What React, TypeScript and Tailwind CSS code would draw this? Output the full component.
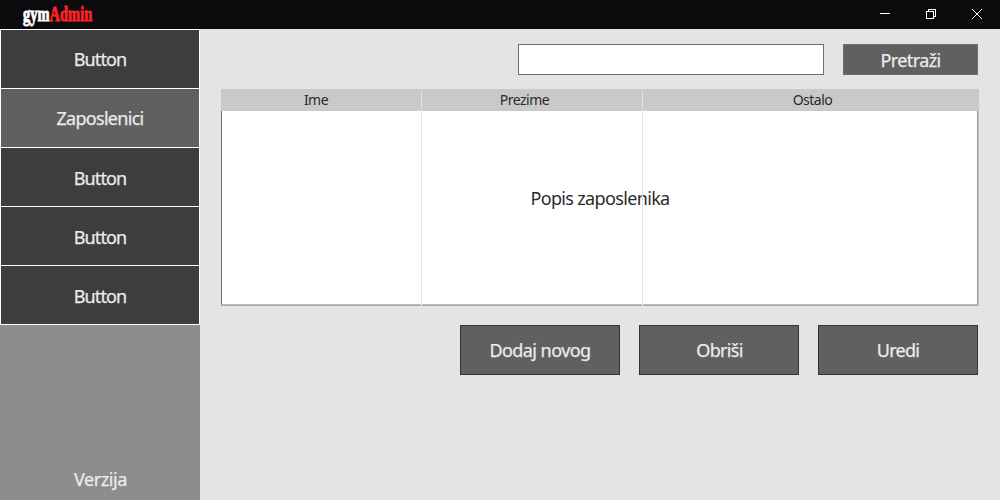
import React from "react";

const navItems = [
  { label: "Button", text: "pb-px tracking-[-0.85px]" },
  { label: "Zaposlenici", text: "pb-px tracking-[-0.7px]", active: true },
  { label: "Button", text: "pt-px tracking-[-0.85px]" },
  { label: "Button", text: "pt-px tracking-[-0.85px]" },
  { label: "Button", text: "pt-px tracking-[-0.85px]" },
];

const actions = [
  { label: "Dodaj novog", text: "tracking-[-0.55px]" },
  { label: "Obriši", text: "pl-[7px] tracking-[-0.7px]" },
  { label: "Uredi", text: "tracking-[-0.75px]" },
];

function TitleBar() {
  return (
    <header className="flex h-[29px] shrink-0 items-start justify-between bg-[#0c0c0e] pr-[18px] pl-[23px]">
      <div className="h-[29px] w-[70px]">
        <div className="w-max origin-left scale-x-[0.69] font-['Liberation_Serif',serif] text-[21px] leading-[28px] font-bold text-white [-webkit-text-stroke:0.9px_currentColor]">
          gym<span className="text-[#ff2226]">Admin</span>
        </div>
      </div>
      <div className="flex gap-9 pt-[9px]">
        <svg width="10" height="10" shapeRendering="crispEdges">
          <rect y="4" width="10" height="1" fill="white" />
        </svg>
        <svg width="10" height="10" fill="none" stroke="white" shapeRendering="crispEdges">
          <path d="M.5 2.5h7v7h-7zM2.5 2.5v-2h7v7h-2" />
        </svg>
        <svg width="10" height="10" fill="none" stroke="white">
          <path d="M0 0l10 10M10 0L0 10" />
        </svg>
      </div>
    </header>
  );
}

function Sidebar() {
  return (
    <aside className="flex w-[200px] shrink-0 flex-col justify-between bg-[#8d8d8d] text-[18px] text-[#ebebeb] [-webkit-text-stroke:0.25px_currentColor]">
      <nav className="flex flex-col gap-px bg-white p-px">
        {navItems.map((item, i) => (
          <button
            key={i}
            className={`h-[58px] leading-[24px] ${item.active ? "bg-[#606060]" : "bg-[#3d3d3d]"} ${item.text}`}
          >
            {item.label}
          </button>
        ))}
      </nav>
      <div className="pb-[9px] pl-px text-center leading-[24px] tracking-[-0.4px]">Verzija</div>
    </aside>
  );
}

function StaffTable() {
  return (
    <section className="relative mt-[14px] flex h-[217px] w-[758px] flex-col">
      <div className="flex h-[22px] shrink-0 bg-[#c9c9c9] text-[14px] leading-[22px] tracking-[-0.5px] text-[#2b2b2b]">
        <div className="w-[200px] pr-[10px] text-center">Ime</div>
        <div className="w-[221px] pr-[14px] text-center">Prezime</div>
        <div className="flex-1 pl-[4px] text-center">Ostalo</div>
      </div>
      <div className="flex-1 border-r border-b border-r-[#c4c4c4] border-b-[#a9a9a9]">
        <div className="flex h-full items-start justify-center border border-t-0 border-l-[#6f6f6f] border-r-[#999999] border-b-[#bcbcbc] bg-white pt-[75px] pl-px text-[18px] leading-[24px] tracking-[-0.65px] text-[#2b2b2b]">
          Popis zaposlenika
        </div>
      </div>
      <div className="absolute top-px bottom-0 left-[200px] w-px bg-[#e4e4e4]" />
      <div className="absolute top-px bottom-0 left-[421px] w-px bg-[#e4e4e4]" />
    </section>
  );
}

export default function App() {
  return (
    <div className="flex h-[500px] w-[1000px] flex-col overflow-hidden bg-[#e4e4e4] font-['Noto_Sans',sans-serif]">
      <TitleBar />
      <div className="flex min-h-0 flex-1">
        <Sidebar />
        <main className="flex flex-1 flex-col pt-[15px] pl-[21px]">
          <div className="flex justify-end gap-[19px] pr-[22px]">
            <input
              aria-label="Search"
              className="h-[31px] w-[306px] border border-[#6f6f6f] bg-white px-2 outline-none"
            />
            <button className="h-[31px] w-[135px] border border-[#6f6f6f] bg-[#606060] pt-px text-[18px] leading-[24px] tracking-[-0.6px] text-[#ebebeb] [-webkit-text-stroke:0.25px_currentColor]">
              Pretraži
            </button>
          </div>
          <StaffTable />
          <div className="mt-[19px] flex justify-end gap-[19px] pr-[22px]">
            {actions.map((action) => (
              <button
                key={action.label}
                className={`h-[50px] w-[160px] border border-[#333333] bg-[#606060] px-[6px] pb-px text-[18px] leading-[24px] text-[#ebebeb] [-webkit-text-stroke:0.25px_currentColor] ${action.text}`}
              >
                {action.label}
              </button>
            ))}
          </div>
        </main>
      </div>
    </div>
  );
}
